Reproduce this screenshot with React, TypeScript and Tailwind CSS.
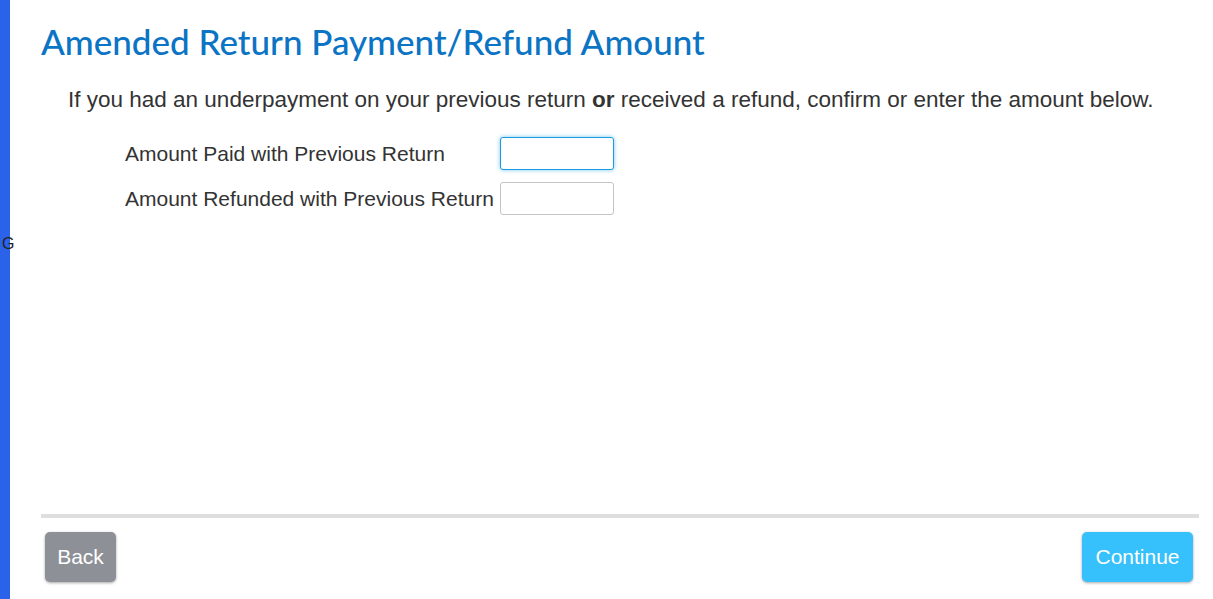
import React from "react"

const sans = "font-[family-name:'Liberation_Sans',Arial,sans-serif]"

export default function App() {
  return (
    <div className="relative flex h-[599px] w-[1213px] overflow-hidden bg-white">
      {/* left accent bar */}
      <div className="w-[10px] shrink-0 bg-[#2a63ea]" />
      <span className={`absolute left-[2px] top-[236px] ${sans} text-[16px] leading-none text-[#222]`}>
        G
      </span>

      <div className="flex flex-1 flex-col pl-[31px] pr-[14px]">
        <h1 className="mt-[20px] font-[family-name:'Lato',sans-serif] text-[35px] leading-[42px] font-medium text-[#0b74c4]">
          Amended Return Payment/Refund Amount
        </h1>

        <p className={`mt-[25px] pl-[27px] ${sans} text-[22.5px] leading-[26px] text-[#333]`}>
          If you had an underpayment on your previous return <b>or</b> received a refund, confirm or enter the amount below.
        </p>

        <div className={`mt-[24px] ml-[84px] flex flex-col gap-[12px] ${sans} text-[21px] text-[#333]`}>
          <div className="flex items-center">
            <label className="w-[375px]">Amount Paid with Previous Return</label>
            <input
              type="text"
              className="h-[33px] w-[114px] rounded-[3px] border border-[#1a9de0] bg-white shadow-[0_0_4px_rgba(30,160,230,0.6)] outline-none"
            />
          </div>
          <div className="flex items-center">
            <label className="w-[375px]">Amount Refunded with Previous Return</label>
            <input
              type="text"
              className="h-[33px] w-[114px] rounded-[3px] border border-[#c4c4c4] bg-white outline-none"
            />
          </div>
        </div>

        <div className="mt-auto border-t-4 border-[#dedede]" />
        <div className={`mt-[14px] mb-[17px] flex justify-between pl-[4px] pr-[6px] ${sans} text-[21px]`}>
          <button className="h-[50px] w-[71px] rounded-[5px] bg-[#8d9096] text-white shadow-[0_1px_3px_rgba(0,0,0,0.35)]">
            Back
          </button>
          <button className="h-[50px] w-[111px] rounded-[5px] bg-[#36c0fc] text-white shadow-[0_1px_3px_rgba(0,0,0,0.35)]">
            Continue
          </button>
        </div>
      </div>
    </div>
  )
}
